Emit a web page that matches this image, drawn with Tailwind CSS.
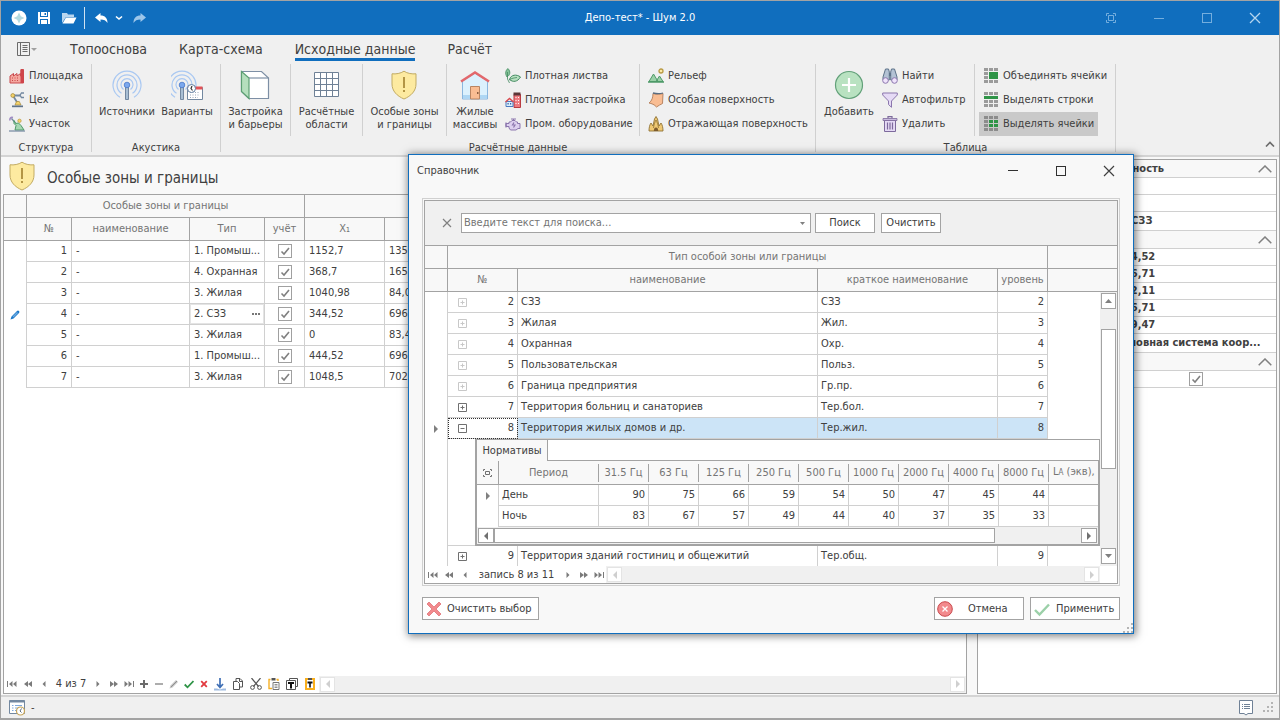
<!DOCTYPE html>
<html lang="ru">

<head>
    <meta charset="UTF-8">
    <meta name="viewport" content="width=device-width, initial-scale=1.0">
    <title>Депо-тест* - Шум 2.0</title>
    <script src="https://cdn.jsdelivr.net/npm/@tailwindcss/browser@4"></script>
</head>

<body class="relative h-screen overflow-hidden bg-white font-['DejaVu_Sans_Condensed','DejaVu_Sans',sans-serif] text-[11px] leading-4 text-[#404040]">

    <!-- shared glyphs -->
    <svg class="hidden">
        <symbol id="shield" viewBox="0 0 28 30">
            <path d="M14 1.2C10.500 3.500 6 4.200 2 3.800V14c0 7 5 12 12 15 7-3 12-8 12-15V3.800C22 4.200 17.500 3.500 14 1.200z" fill="#fdeaa0" stroke="#c2ab62" />
            <path d="M13 7h2v11h-2zM13 20h2v2h-2z" fill="#b39545" />
        </symbol>
        <symbol id="tick" viewBox="0 0 14 14"><path d="M3.500 7.500l2.500 2.500 5-6" fill="none" stroke="#808080" stroke-width="1.600" /></symbol>
        <symbol id="plus" viewBox="0 0 9 9"><path d="M.5.5h8v8h-8zM2.500 4.500h4M4.500 2.500v4" fill="none" stroke="currentColor" /></symbol>
        <symbol id="minus" viewBox="0 0 9 9"><path d="M.5.5h8v8h-8zM2.500 4.500h4" fill="none" stroke="currentColor" /></symbol>
        <symbol id="first" viewBox="0 0 10 6"><path d="M0 0h1v6H0zM5.500 0v6L2 3zM9.500 0v6L6 3z" fill="currentColor" /></symbol>
        <symbol id="rew" viewBox="0 0 8 6"><path d="M4 0v6L0 3zM8 0v6L4 3z" fill="currentColor" /></symbol>
        <symbol id="prev" viewBox="0 0 4 8"><path d="M4 0v8L0 4z" fill="currentColor" /></symbol>
        <symbol id="next" viewBox="0 0 4 8"><path d="M0 0v8l4-4z" fill="currentColor" /></symbol>
        <symbol id="ffwd" viewBox="0 0 8 6"><path d="M0 0v6l4-3zM4 0v6l4-3z" fill="currentColor" /></symbol>
        <symbol id="last" viewBox="0 0 10 6"><path d="M9 0h1v6H9zM.5 0v6L4 3zM4.500 0v6L8 3z" fill="currentColor" /></symbol>
        <symbol id="chev" viewBox="0 0 14 8"><path d="M.7 7.300L7 1l6.300 6.300" fill="none" stroke="#808080" stroke-width="1.500" /></symbol>
        <symbol id="fit" viewBox="0 0 10 10"><path d="M.5 3V.5H3M7 .5h2.500V3M9.500 7v2.500H7M3 9.500H.5V7M2.500 2.500h5v5h-5z" fill="none" stroke="currentColor" /></symbol>
        <symbol id="grip" viewBox="0 0 12 12"><path d="M8 0h2v2H8zM4 4h2v2H4zM8 4h2v2H8zM0 8h2v2H0zM4 8h2v2H4zM8 8h2v2H8z" fill="#b4b4b4" /></symbol>
        <symbol id="antenna" viewBox="0 0 30 30">
            <path d="M8 27.200a14 14 0 1 1 14 0M9.500 23.300a10 10 0 1 1 11 0M11.500 19.500a6 6 0 1 1 7 0" fill="none" stroke="#a9c8f2" stroke-width="1.200" />
            <path d="M13.500 17h3v12.500h-3z" fill="#a9bfd4" stroke="#7388a0" />
            <circle cx="15" cy="15" r="2.800" fill="#7ba8ee" stroke="#4a78c8" stroke-width=".8" />
        </symbol>
    </svg>

    <div class="flex h-full flex-col border border-b-2 border-[#a3a3a3] bg-[#f8f8f8]">

        <!-- window title -->
        <header class="relative flex h-[34px] shrink-0 items-center bg-[#106ebe] text-white">
            <div class="flex items-center pl-2.5">
                <svg class="size-4" viewBox="0 0 16 16"><circle cx="8" cy="8" r="7.500" fill="#fff" /><path d="M8 2.500L9.800 6.200 13.500 8 9.800 9.800 8 13.500 6.200 9.800 2.500 8l3.700-1.800z" fill="#b4dbe2" /></svg>
                <button class="ml-2.5" aria-label="Сохранить"><svg class="size-3.5" viewBox="0 0 14 14"><path d="M1 1h12v12H1z" fill="#fff" /><path d="M3 1h8v5H3zM3 8h8v5H3z" fill="#106ebe" /><path d="M4 1h6v4H4zM4 9h6v4H4z" fill="#fff" /><path d="M7.500 2H9v2H7.500z" fill="#106ebe" /></svg></button>
                <button class="ml-2.5" aria-label="Открыть"><svg class="h-3.5 w-4" viewBox="0 0 16 14"><path d="M1 12V2h5l1 1.500h6V6H5z" fill="#b9d6ef" /><path d="M1.500 12.500L5 6.500h10.500L12.500 12.500z" fill="#fff" /></svg></button>
                <span class="ml-[7px] h-[22px] w-px bg-[#cfe2f2]"></span>
                <button class="ml-2.5" aria-label="Отменить"><svg class="h-3.5 w-3.5" viewBox="0 0 14 14"><path d="M0 6.500L5.500 2v2.500c4.500 0 7 2.500 7 7.500-1.500-2.500-3.500-3.500-7-3.500V11z" fill="#fff" /></svg></button>
                <button class="ml-1.5" aria-label="Список действий"><svg class="h-3.5 w-2" viewBox="0 0 8 14"><path d="M1 5.500L4 8l3-2.500" fill="none" stroke="#fff" stroke-width="1.600" /></svg></button>
                <button class="ml-2.5" aria-label="Вернуть"><svg class="h-3.5 w-3.5" viewBox="0 0 14 14"><path d="M13 6.500L7.500 2v2.500c-4.500 0-7 2.500-7 7.500 1.500-2.500 3.500-3.500 7-3.500V11z" fill="#9dc6ea" /></svg></button>
            </div>
            <h1 class="absolute inset-x-0 text-center">Депо-тест* - Шум 2.0</h1>
            <div class="relative ml-auto flex text-[#74aede]">
                <button class="grid h-8 w-12 place-items-center" aria-label="Во весь экран"><svg class="size-2.5"><use href="#fit" /></svg></button>
                <button class="grid h-8 w-12 place-items-center" aria-label="Свернуть"><span class="h-px w-2.5 bg-current"></span></button>
                <button class="grid h-8 w-12 place-items-center" aria-label="Развернуть"><span class="size-2.5 border border-current"></span></button>
                <button class="grid h-8 w-12 place-items-center text-[#b5d5ef]" aria-label="Закрыть"><svg class="size-3" viewBox="0 0 12 12"><path d="M1 1l10 10M11 1L1 11" stroke="currentColor" stroke-width="1.300" /></svg></button>
            </div>
        </header>

        <!-- ribbon -->
        <div class="relative shrink-0 border-b-2 border-[#d4d4d4] bg-[#f0f0f0]">
            <nav class="flex h-[29px] text-[14px] leading-[22px]">
                <button class="ml-4 flex h-7 items-center" aria-label="Файл">
                    <svg class="h-3.5 w-5" viewBox="0 0 20 14"><path d="M.5.5h12v13H.5zM3.500.5v13M5.500 3.500h5M5.500 5.500h5M5.500 7.500h5M5.500 9.500h5" fill="none" stroke="#6b6b6b" /><path d="M14 6h6l-3 3z" fill="#a0a0a0" /></svg>
                </button>
                <a href="#" class="ml-[33px] mt-[3px]">Топооснова</a>
                <a href="#" class="ml-8 mt-[3px]">Карта-схема</a>
                <a href="#" class="ml-8 mt-[3px] h-[23px] border-b-3 border-[#106ebe]">Исходные данные</a>
                <a href="#" class="ml-8 mt-[3px]">Расчёт</a>
            </nav>
            <div class="flex h-[91px]">

                <section class="h-[88px] w-[91px] border-r border-[#d0d0d0]">
                    <div class="flex h-[72px] flex-col items-start pl-2">
                        <button class="flex h-6 items-center gap-1"><svg class="size-4" viewBox="0 0 16 16"><path d="M1 15V8l3.500-2.500V8L8 5.500V8l3.500-2.500V8h.5V1.500h2.500V15z" fill="#f4a79f" stroke="#c9484c" /><path d="M11.500 1.500h3V15h-3z" fill="#d0444a" /><path d="M3 9.500h1v1H3zM5.500 9.500h1v1h-1zM8 9.500h1v1H8zM3 12h1v1H3zM5.500 12h1v1h-1zM8 12h1v1H8z" fill="#c9484c" /></svg>Площадка</button>
                        <button class="flex h-6 items-center gap-1"><svg class="size-4" viewBox="0 0 16 16"><path d="M4 3.500h7M4.500 4.500l4 6.500" fill="none" stroke="#7388a0" stroke-width="1.800" /><path d="M15 1h-2.500L11 3.200l1.500 2.300H15" fill="none" stroke="#7388a0" stroke-width="1.300" /><circle cx="3.800" cy="3.500" r="1.900" fill="#f5d36a" stroke="#a58a3e" stroke-width=".8" /><path d="M6 13l1.500-3.500h2.800L12 13z" fill="#f5d36a" stroke="#a58a3e" stroke-width=".7" /><path d="M3 13.500h11v1.700H3z" fill="#5f7389" /></svg>Цех</button>
                        <button class="flex h-6 items-center gap-1"><svg class="size-4" viewBox="0 0 16 16"><path d="M.8 4.500c0-2.500 1-3.500 3.200-3" stroke="#a08bc4" stroke-width="1.600" fill="none" /><path d="M2.500 2.500l4 4.500" stroke="#7388a0" stroke-width="1.300" /><path d="M5 4.500l1.500 3L9.500 7l2.500 2.500L15 14H6l1-4.500-2-2z" fill="#a6d8b2" stroke="#4e9a68" /><circle cx="10.500" cy="4.800" r="1.700" fill="#f5d36a" stroke="#b99a44" stroke-width=".7" /><path d="M0 15h16" stroke="#7388a0" stroke-width="1.200" /></svg>Участок</button>
                    </div>
                    <h2 class="pt-1 text-center">Структура</h2>
                </section>

                <section class="h-[88px] w-[129px] border-r border-[#d0d0d0]">
                    <div class="flex h-[72px] justify-center leading-[13px]">
                        <button class="flex w-[62px] flex-col items-center pt-1.5"><svg class="mb-[5px] size-[30px]"><use href="#antenna" /></svg>Источники</button>
                        <button class="flex w-[58px] flex-col items-center pt-1.5"><svg class="mb-[5px] h-[30px] w-8" viewBox="0 0 32 30"><svg x="-4" width="30" height="30"><use href="#antenna" /></svg><path d="M16.500 17.500h15v12h-15z" fill="#fff" stroke="#7388a0" /><path d="M16.500 16.500h15v3h-15z" fill="#e25257" /><path d="M19 22.500h10M19 25h10M19 27.500h8" stroke="#9aa9bb" stroke-dasharray="1 1.500" /><circle cx="20.500" cy="18.500" r="4" fill="#fff" stroke="#5f7d9f" /><path d="M21 16l-1 2.500 1.500 2" fill="none" stroke="#333" stroke-width="1.200" /></svg>Варианты</button>
                    </div>
                    <h2 class="pt-1 text-center">Акустика</h2>
                </section>

                <section class="h-[88px] w-[595px] border-r border-[#d0d0d0]">
                    <div class="flex h-[72px]">
                        <div class="flex w-[70px] justify-center border-r border-[#d0d0d0] leading-[13px]">
                            <button class="flex flex-col items-center pt-1.5"><svg class="mb-[5px] size-[30px]" viewBox="0 0 30 30"><path d="M1.500 1.500h20l7 6.500v20.500H9l-7.500-7z" fill="#fff" stroke="#7d8fa5" stroke-width="1.200" /><path d="M1.500 1.500L9 8v20.500l-7.500-7z" fill="#b5dfbd" stroke="#5d9f73" stroke-width="1.200" /><path d="M9 8h19.500" stroke="#7d8fa5" stroke-width="1.200" /></svg>Застройка<br>и барьеры</button>
                        </div>
                        <div class="flex w-[72px] justify-center border-r border-[#d0d0d0] leading-[13px]">
                            <button class="flex flex-col items-center pt-1.5"><svg class="mb-[5px] size-[30px]" viewBox="0 0 30 30"><path d="M3 3h24v24H3z" fill="#fff" /><path d="M2.500 2.500h24v24h-24zM8.500 2.500v24M14.500 2.500v24M20.500 2.500v24M2.500 8.500h24M2.500 14.500h24M2.500 20.500h24" fill="none" stroke="#6f8196" /></svg>Расчётные<br>области</button>
                        </div>
                        <div class="flex w-[84px] justify-center border-r border-[#d0d0d0] leading-[13px]">
                            <button class="flex flex-col items-center pt-1.5"><svg class="mb-[5px] h-[30px] w-7"><use href="#shield" /></svg>Особые зоны<br>и границы</button>
                        </div>
                        <div class="flex w-[193px] border-r border-[#d0d0d0]">
                            <button class="flex w-14 flex-col items-center pt-1.5 leading-[13px]"><svg class="mb-[5px] size-[30px]" viewBox="0 0 30 30"><path d="M2.500 11L15 3l12.500 8v18h-25z" fill="#dcf1fd" stroke="#8ab6de" /><path d="M3 25h24v3.500H3z" fill="#aed7f4" /><path d="M1 11.500L15 2.500l14 9" fill="none" stroke="#e2686c" stroke-width="2.500" /><path d="M10.500 16.500h9V29h-9z" fill="#f9bd93" stroke="#b98562" /><path d="M17 22h1.500v2H17z" fill="#8a5f42" /></svg>Жилые<br>массивы</button>
                            <div class="flex flex-col items-start pl-0.5">
                                <button class="flex h-6 items-center gap-1"><svg class="size-4" viewBox="0 0 16 16"><path d="M2 9C-.5 5 1 2 3 .5 6 4 5 7 2 9z" fill="#86c39a" stroke="#428a60" stroke-width=".8" /><path d="M4.500 11.500c1.500-5 7-5.500 11-2.500-3 5-7.500 5.500-11 2.500z" fill="#b8e0c0" stroke="#428a60" /><path d="M2.500 4v7l2 4M4 12c3-2 5-2 8-2.500" fill="none" stroke="#428a60" stroke-width=".8" /></svg>Плотная листва</button>
                                <button class="flex h-6 items-center gap-1"><svg class="size-4" viewBox="0 0 16 16"><path d="M9 2.500h6.500v13H9z" fill="#ee7b80" stroke="#b93b42" /><path d="M8.500.5h7v3h-7z" fill="#5c3638" /><path d="M10.500 5h1v1h-1zM13 5h1v1h-1zM10.500 8h1v1h-1zM13 8h1v1h-1zM10.500 11h1v1h-1zM13 11h1v1h-1z" fill="#fff" /><path d="M1 9.500h7v5H1z" fill="#d9eefc" stroke="#4b7bc0" /><path d="M.5 10l4-3.500 4 3.500" fill="none" stroke="#d9484e" stroke-width="1.400" /><path d="M2.500 11h1.200v1.500H2.500zM5 11h1.200v1.500H5z" fill="#365f9f" /></svg>Плотная застройка</button>
                                <button class="flex h-6 items-center gap-1"><svg class="size-4" viewBox="0 0 16 16"><path d="M4 6h1.500L7 4.500h3L11.500 6h1v1.500H15v5h-2L11 14H5.500L4 12v-1.500H1V7.500h3z" fill="#ddd0ef" stroke="#8b76ad" /><path d="M6 3h5M8.500 3v1.500M1 6.500v5M9 6.500L7.500 9H10L8.500 11.500" fill="none" stroke="#8b76ad" stroke-width="1.200" /></svg>Пром. оборудование</button>
                            </div>
                        </div>
                        <div class="flex flex-col items-start pl-2">
                            <button class="flex h-6 items-center gap-1"><svg class="size-4" viewBox="0 0 16 16"><path d="M1 13.500L5.500 6 10 13.500zM8 13.500L11.500 8l3.500 5.500z" fill="#9bd0a8" stroke="#4e9a68" /><path d="M0 14h16" stroke="#4e9a68" stroke-width="1.500" /><circle cx="13" cy="3" r="2" fill="#fbe9a5" stroke="#b99a44" stroke-width="1.300" /></svg>Рельеф</button>
                            <button class="flex h-6 items-center gap-1"><svg class="size-4" viewBox="0 0 16 16"><path d="M5 1.500c4 1 7 1 10 0l-.5 10c-2 1-4 2-6 3.500C6.500 12.500 3.500 11.500 1 11c3-2 4-6 4-9.500z" fill="#f9bd93" stroke="#b98562" /><path d="M5 1c4 1 7 1 10 0" fill="none" stroke="#5a6c80" stroke-width="1.300" /></svg>Особая поверхность</button>
                            <button class="flex h-6 items-center gap-1"><svg class="size-4" viewBox="0 0 16 16"><path d="M1 15c0-3 .5-6 2-8l2 3L6.500 3 8 .5 9.500 3 11 10l2-3c1.500 2 2 5 2 8z" fill="#efc873" stroke="#8f7234" stroke-width=".9" /><path d="M5.500 12C6 8 7 6 8 4c1 2 2 4 2.500 8" fill="none" stroke="#8f7234" stroke-width=".8" /><path d="M5.800 15c0-2.500 1-3.500 2.200-3.500s2.200 1 2.200 3.500z" fill="#7d5b2c" /></svg>Отражающая поверхность</button>
                        </div>
                    </div>
                    <h2 class="pt-1 text-center">Расчётные данные</h2>
                </section>

                <section class="h-[88px] w-[300px] border-r border-[#d0d0d0]">
                    <div class="flex h-[72px]">
                        <div class="flex w-[159px] border-r border-[#d0d0d0]">
                            <button class="flex w-[66px] flex-col items-center pt-1.5 leading-[13px]"><svg class="mb-[5px] size-[30px]" viewBox="0 0 30 30"><circle cx="15" cy="15" r="13.500" fill="#b9e2c1" stroke="#62a079" stroke-width="1.200" /><path d="M15 8v14M8 15h14" stroke="#fff" stroke-width="2.200" /></svg>Добавить</button>
                            <div class="flex flex-col items-start">
                                <button class="flex h-6 items-center gap-1"><svg class="size-4" viewBox="0 0 16 16"><path d="M3.500 1h3l.8 3v8H1V9zM9.500 1h3L15 9v3H8.700V4z" fill="#b3c2d4" stroke="#5d7289" /><path d="M7 5h2v3H7z" fill="#5d7289" /><circle cx="3.500" cy="12.500" r="2.800" fill="#efe3fb" stroke="#8b76ad" /><circle cx="12.500" cy="12.500" r="2.800" fill="#efe3fb" stroke="#8b76ad" /></svg>Найти</button>
                                <button class="flex h-6 items-center gap-1"><svg class="size-4" viewBox="0 0 16 16"><path d="M.7 1h14.600v2L9.500 9v6.300l-3-2.800V9L.7 3z" fill="#e5daf5" stroke="#8b76ad" /></svg>Автофильтр</button>
                                <button class="flex h-6 items-center gap-1"><svg class="size-4" viewBox="0 0 16 16"><path d="M2.500 4.500h11v11h-11z" fill="#e5daf5" stroke="#7d6a9c" /><path d="M1 2.500h14v2H1z" fill="#c9bbdf" stroke="#7d6a9c" stroke-width=".8" /><path d="M6 2V.7h4V2M5.500 6.500v7M8 6.500v7M10.500 6.500v7" fill="none" stroke="#7d6a9c" stroke-width="1.200" /></svg>Удалить</button>
                            </div>
                        </div>
                        <div class="flex flex-col items-start pl-1">
                            <button class="flex h-6 items-center gap-[3px] pl-[5px]"><svg class="h-4 w-4" viewBox="0 0 16 16"><path d="M0 0h4v3H0zM5 0h4v3H5zM10 0h4v3h-4zM0 4h4v3H0zM0 8h4v3H0zM0 12h4v3H0zM5 12h4v3H5zM10 12h4v3h-4z" fill="#9b9b9b" /><path d="M5 4h9v7H5z" fill="#2f9447" /></svg>Объединять ячейки</button>
                            <button class="flex h-6 items-center gap-[3px] pl-[5px]"><svg class="h-4 w-4" viewBox="0 0 16 16"><path d="M0 0h4v3H0zM5 0h4v3H5zM10 0h4v3h-4zM0 8h4v3H0zM5 8h4v3H5zM10 8h4v3h-4zM0 12h4v3H0zM5 12h4v3H5zM10 12h4v3h-4z" fill="#9b9b9b" /><path d="M0 4h14v3H0z" fill="#2f9447" /></svg>Выделять строки</button>
                            <button class="flex h-6 items-center gap-[3px] bg-[#c9c9c9] pr-1 pl-[5px]"><svg class="h-4 w-4" viewBox="0 0 16 16"><path d="M0 0h4v3H0zM5 0h4v3H5zM10 0h4v3h-4zM0 4h4v3H0zM0 8h4v3H0zM0 12h4v3H0zM5 12h4v3H5zM10 12h4v3h-4z" fill="#8c8c8c" /><path d="M5 4h4v3H5zM10 4h4v3h-4zM5 8h4v3H5zM10 8h4v3h-4z" fill="#2f9447" /></svg>Выделять ячейки</button>
                        </div>
                    </div>
                    <h2 class="pt-1 text-center">Таблица</h2>
                </section>

                <button class="mr-1 mb-2 ml-auto self-end" aria-label="Свернуть ленту"><svg class="h-1.5 w-2.5" viewBox="0 0 10 6"><path d="M1 5.500l4-4 4 4" fill="none" stroke="#6b6b6b" stroke-width="1.600" /></svg></button>
            </div>
        </div>

        <!-- work area -->
        <main class="flex min-h-0 flex-1 gap-2.5 pr-0.5 pb-px pl-0.5">
            <section class="flex min-w-0 flex-1 flex-col">
                <div class="flex h-[37px] shrink-0 items-center gap-[11px] pl-[5px]">
                    <svg class="h-[30px] w-7"><use href="#shield" /></svg>
                    <h2 class="pt-1 text-[15px] leading-5">Особые зоны и границы</h2>
                </div>
                <div class="flex min-h-0 flex-1 flex-col border border-[#a3a3a3] bg-white">
                    <div class="min-h-0 flex-1 overflow-hidden">
                        <table class="w-full table-fixed border-separate border-spacing-0 [&_td]:h-[21px] [&_td]:overflow-hidden [&_td]:border-r [&_td]:border-b [&_td]:border-[#d0d0d0] [&_td]:px-1 [&_td]:py-0 [&_td]:whitespace-nowrap [&_td:first-child]:border-b-0 [&_th]:h-[23px] [&_th]:border-r [&_th]:border-b [&_th]:border-[#a3a3a3] [&_th]:bg-[#f8f8f8] [&_th]:p-0 [&_th]:font-normal [&_th]:text-[#757575]">
                            <colgroup>
                                <col class="w-[23px]"><col class="w-[45px]"><col class="w-[118px]"><col class="w-[75px]"><col class="w-10"><col class="w-20"><col class="w-20"><col>
                            </colgroup>
                            <thead>
                                <tr><th></th><th colspan="4">Особые зоны и границы</th><th colspan="3"></th></tr>
                                <tr><th></th><th>№</th><th>наименование</th><th>Тип</th><th>учёт</th><th>X₁</th><th></th><th></th></tr>
                            </thead>
                            <tbody>
                                <tr>
                                    <td></td><td class="text-right">1</td><td>-</td><td class="pr-0!">1. Промыш...</td>
                                    <td><label class="grid justify-center *:col-start-1 *:row-start-1"><input type="checkbox" checked aria-label="учёт 1" class="size-3.5 appearance-none border border-[#a0a0a0]"><svg class="size-3.5"><use href="#tick" /></svg></label></td>
                                    <td>1152,7</td><td>1357</td><td></td>
                                </tr>
                                <tr>
                                    <td></td><td class="text-right">2</td><td>-</td><td>4. Охранная</td>
                                    <td><label class="grid justify-center *:col-start-1 *:row-start-1"><input type="checkbox" checked aria-label="учёт 2" class="size-3.5 appearance-none border border-[#a0a0a0]"><svg class="size-3.5"><use href="#tick" /></svg></label></td>
                                    <td>368,7</td><td>1650</td><td></td>
                                </tr>
                                <tr>
                                    <td></td><td class="text-right">3</td><td>-</td><td>3. Жилая</td>
                                    <td><label class="grid justify-center *:col-start-1 *:row-start-1"><input type="checkbox" checked aria-label="учёт 3" class="size-3.5 appearance-none border border-[#a0a0a0]"><svg class="size-3.5"><use href="#tick" /></svg></label></td>
                                    <td>1040,98</td><td>84,0</td><td></td>
                                </tr>
                                <tr>
                                    <td><svg class="mx-auto size-2.5" viewBox="0 0 10 10"><path d="M.5 9.500L1.500 6.500 7 1a1.400 1.400 0 0 1 2 2L3.500 8.500z" fill="#1a76c8" /><path d="M2.500 6.500L7 2l1 1-4.500 4.500z" fill="#6aaae2" /></svg></td>
                                    <td class="text-right">4</td><td>-</td>
                                    <td class="shadow-[inset_0_0_0_1px_#e4e4e4]"><div class="flex items-center justify-between">2. СЗЗ<button aria-label="Выбрать тип"><svg class="h-0.5 w-2" viewBox="0 0 8 2"><path d="M0 0h2v2H0zM3 0h2v2H3zM6 0h2v2H6z" fill="#777" /></svg></button></div></td>
                                    <td><label class="grid justify-center *:col-start-1 *:row-start-1"><input type="checkbox" checked aria-label="учёт 4" class="size-3.5 appearance-none border border-[#a0a0a0]"><svg class="size-3.5"><use href="#tick" /></svg></label></td>
                                    <td>344,52</td><td>696,</td><td></td>
                                </tr>
                                <tr>
                                    <td></td><td class="text-right">5</td><td>-</td><td>3. Жилая</td>
                                    <td><label class="grid justify-center *:col-start-1 *:row-start-1"><input type="checkbox" checked aria-label="учёт 5" class="size-3.5 appearance-none border border-[#a0a0a0]"><svg class="size-3.5"><use href="#tick" /></svg></label></td>
                                    <td>0</td><td>83,4</td><td></td>
                                </tr>
                                <tr>
                                    <td></td><td class="text-right">6</td><td>-</td><td class="pr-0!">1. Промыш...</td>
                                    <td><label class="grid justify-center *:col-start-1 *:row-start-1"><input type="checkbox" checked aria-label="учёт 6" class="size-3.5 appearance-none border border-[#a0a0a0]"><svg class="size-3.5"><use href="#tick" /></svg></label></td>
                                    <td>444,52</td><td>696,</td><td></td>
                                </tr>
                                <tr>
                                    <td></td><td class="text-right">7</td><td>-</td><td>3. Жилая</td>
                                    <td><label class="grid justify-center *:col-start-1 *:row-start-1"><input type="checkbox" checked aria-label="учёт 7" class="size-3.5 appearance-none border border-[#a0a0a0]"><svg class="size-3.5"><use href="#tick" /></svg></label></td>
                                    <td>1048,5</td><td>702,</td><td></td>
                                </tr>
                            </tbody>
                        </table>
                    </div>
                    <!-- record navigator -->
                    <div class="flex h-[18px] shrink-0 items-center text-[#7a7a7a]">
                        <button class="grid w-[15px] place-items-center" aria-label="Первая"><svg class="h-1.5 w-2.5"><use href="#first" /></svg></button>
                        <button class="grid w-[17px] place-items-center" aria-label="Назад на страницу"><svg class="h-1.5 w-2"><use href="#rew" /></svg></button>
                        <button class="grid w-4 place-items-center" aria-label="Предыдущая"><svg class="h-1.5 w-1"><use href="#prev" /></svg></button>
                        <span class="w-[38px] text-center text-[#404040]">4 из 7</span>
                        <button class="grid w-4 place-items-center" aria-label="Следующая"><svg class="h-1.5 w-1"><use href="#next" /></svg></button>
                        <button class="grid w-[15px] place-items-center" aria-label="Вперёд на страницу"><svg class="h-1.5 w-2"><use href="#ffwd" /></svg></button>
                        <button class="grid w-[15px] place-items-center" aria-label="Последняя"><svg class="h-1.5 w-2.5"><use href="#last" /></svg></button>
                        <button class="grid w-[15px] place-items-center" aria-label="Добавить запись"><svg class="size-2" viewBox="0 0 8 8"><path d="M3 0h2v3h3v2H5v3H3V5H0V3h3z" fill="#6b6b6b" /></svg></button>
                        <button class="grid w-[15px] place-items-center" aria-label="Удалить запись"><svg class="h-0.5 w-2" viewBox="0 0 8 2"><path d="M0 0h8v2H0z" fill="#adadad" /></svg></button>
                        <button class="grid w-[15px] place-items-center" aria-label="Правка"><svg class="size-2.5" viewBox="0 0 10 10"><path d="M.5 9.500L1.500 6.500 7 1l2 2L3.500 8.500z" fill="#c4c4c4" /><path d="M2 8l6-6" stroke="#8f8f8f" /></svg></button>
                        <button class="grid w-[15px] place-items-center" aria-label="Принять"><svg class="size-2.5" viewBox="0 0 10 10"><path d="M.7 5.500l2.800 2.800L9.500 2" fill="none" stroke="#2f9447" stroke-width="1.800" /></svg></button>
                        <button class="grid w-[15px] place-items-center" aria-label="Отклонить"><svg class="size-2" viewBox="0 0 8 8"><path d="M1.200 1.200l5.600 5.600M6.800 1.200L1.200 6.800" stroke="#e2393f" stroke-width="1.800" /></svg></button>
                        <button class="grid w-[18px] place-items-center" aria-label="Вниз"><svg class="h-[13px] w-3" viewBox="0 0 12 13"><path d="M6 0v9M3 6l3 3.500L9 6" fill="none" stroke="#3f6fb5" stroke-width="1.700" /><path d="M0 10.500h3l3 1 3-1h3v2H0z" fill="#9fbbe0" /></svg></button>
                        <button class="grid w-[18px] place-items-center" aria-label="Копировать"><svg class="size-3" viewBox="0 0 12 12"><path d="M1.500 3.500h4l2 2v6h-6zM4 3V.5h4L10.500 3v6H8M7.500.5V3.500h3" fill="none" stroke="#555" /></svg></button>
                        <button class="grid w-[18px] place-items-center" aria-label="Вырезать"><svg class="size-3" viewBox="0 0 12 12"><path d="M1.500 0L8.500 8.500M10.500 0L3.500 8.500" stroke="#555" stroke-width="1.200" /><circle cx="2.500" cy="9.500" r="1.900" fill="none" stroke="#555" /><circle cx="9.500" cy="9.500" r="1.900" fill="none" stroke="#555" /></svg></button>
                        <button class="grid w-[18px] place-items-center" aria-label="Вставить"><svg class="size-3" viewBox="0 0 12 12"><path d="M2.500 1.500H1v9h3M8.500 1.500H10V3" fill="none" stroke="#f5b027" stroke-width="1.400" /><path d="M3.500 0h4v2.500h-4z" fill="#555" /><path d="M5 4.500h6v7H5z" fill="#fff" stroke="#777" /><path d="M6.500 6.500h3M6.500 8h3M6.500 9.500h3" stroke="#777" stroke-width=".8" /></svg></button>
                        <button class="grid w-[18px] place-items-center" aria-label="Копировать текст"><svg class="size-3" viewBox="0 0 12 12"><path d="M3.500 2.500v-2h8v8h-2" fill="none" stroke="#555" /><path d="M.5 2.500h9v9h-9z" fill="#fff" stroke="#555" /><path d="M2 4h6v2H6v4.500H4V6H2z" fill="#111" /></svg></button>
                        <button class="grid w-[18px] place-items-center" aria-label="Вставить текст"><svg class="size-3" viewBox="0 0 12 12"><path d="M1 0h10v12H1z" fill="#fbb01c" /><path d="M3 2h6v8H3z" fill="#fff" /><path d="M4 0h4v2H4z" fill="#555" /><path d="M3.500 3.500h5v2H6.800V9.500H5.200V5.500H3.500z" fill="#111" /></svg></button>
                        <div class="flex h-[17px] flex-1 items-center justify-between bg-[#f0f0f0] px-px text-[#cfcfcf]">
                            <button class="grid size-[15px] place-items-center border border-[#e4e4e4] bg-white" aria-label="Влево"><svg class="h-2 w-1"><use href="#prev" /></svg></button>
                            <button class="grid size-[15px] place-items-center border border-[#e4e4e4] bg-white" aria-label="Вправо"><svg class="h-2 w-1"><use href="#next" /></svg></button>
                        </div>
                    </div>
                </div>
            </section>

            <!-- properties -->
            <aside class="mt-0.5 w-[300px] shrink-0 border border-[#a3a3a3] bg-white">
                <table class="w-full table-fixed border-separate border-spacing-0 [&_td]:h-[17px] [&_td]:overflow-hidden [&_td]:border-b [&_td]:border-[#d0d0d0] [&_td]:p-0 [&_td]:pl-1 [&_td]:leading-4 [&_td]:font-bold [&_td]:whitespace-nowrap [&_th]:h-[18px] [&_th]:border-b [&_th]:border-[#d0d0d0] [&_th]:bg-[#f8f8f8] [&_th]:p-0 [&_th]:leading-[17px]">
                    <colgroup><col class="w-[133px]"><col></colgroup>
                    <tbody>
                        <tr><th colspan="2"><div class="flex items-center justify-between pr-1"><span class="w-[186px] text-right">Принадлежность</span><svg class="h-2 w-3.5"><use href="#chev" /></svg></div></th></tr>
                        <tr><td></td><td></td></tr>
                        <tr><td></td><td></td></tr>
                        <tr class="*:h-[19px]!"><td></td><td class="pl-1.5!">2. СЗЗ</td></tr>
                        <tr><th colspan="2"><div class="flex justify-end pr-1"><svg class="h-2 w-3.5"><use href="#chev" /></svg></div></th></tr>
                        <tr><td></td><td class="pl-1.5!">344,52</td></tr>
                        <tr><td></td><td class="pl-1.5!">696,71</td></tr>
                        <tr><td></td><td class="pl-1.5!">442,11</td></tr>
                        <tr><td></td><td class="pl-1.5!">696,71</td></tr>
                        <tr><td></td><td class="pl-1.5!">119,47</td></tr>
                        <tr class="*:h-[19px]!"><td></td><td>Основная система коор...</td></tr>
                        <tr><th colspan="2"><div class="flex justify-end pr-1"><svg class="h-2 w-3.5"><use href="#chev" /></svg></div></th></tr>
                        <tr><td></td><td><label class="grid justify-center *:col-start-1 *:row-start-1"><input type="checkbox" checked aria-label="учёт" class="size-3.5 appearance-none border border-[#a0a0a0]"><svg class="size-3.5"><use href="#tick" /></svg></label></td></tr>
                    </tbody>
                </table>
            </aside>
        </main>

        <!-- status bar -->
        <footer class="flex h-[23px] shrink-0 items-center border-t-2 border-[#d4d4d4] bg-[#f0f0f0] pr-1 pl-2">
            <svg class="size-4" viewBox="0 0 16 16"><path d="M.5.5h15v13H.5z" fill="#fff" stroke="#7388a0" /><path d="M.5.5h15v2H.5z" fill="#7388a0" /><path d="M3 5.500h1.500M3 8h1.500M3 10.500h1.500M6 5.500h7M6 8h5M6 10.500h3" stroke="#7fa9dc" /><circle cx="11.500" cy="11" r="4" fill="#fff" stroke="#c6a458" stroke-width="1.200" /><path d="M12.500 8.500L11 11l1.500 1.500" fill="none" stroke="#5a6c80" /></svg>
            <span class="ml-1.5">-</span>
            <svg class="ml-auto h-4 w-3.5" viewBox="0 0 14 16"><path d="M.5.5h13v13H9L7 15l-2-1.500H.5z" fill="#fff" stroke="#6f8196" /><path d="M3 4.500h1M5 4.500h6M3 6.500h1M5 6.500h6M3 8.500h1M5 8.500h6" stroke="#6f8196" /></svg>
            <svg class="ml-2.5 size-3"><use href="#grip" /></svg>
        </footer>
    </div>

    <!-- reference book window -->
    <div role="dialog" aria-label="Справочник" class="absolute top-[154px] left-[408px] flex w-[726px] flex-col border border-[#106ebe] bg-[#f8f8f8] shadow-[1px_1px_8px_1px_rgba(0,0,0,0.5)]">
        <div class="flex h-[43px] items-start">
            <h2 class="pt-2 pl-2">Справочник</h2>
            <div class="ml-auto flex">
                <button class="grid h-[31px] w-12 place-items-center" aria-label="Свернуть"><span class="h-px w-2.5 bg-[#303030]"></span></button>
                <button class="grid h-[31px] w-12 place-items-center" aria-label="Развернуть"><span class="size-2.5 border border-[#303030]"></span></button>
                <button class="grid h-[31px] w-12 place-items-center" aria-label="Закрыть"><svg class="size-3" viewBox="0 0 12 12"><path d="M1 1l10 10M11 1L1 11" stroke="#404040" stroke-width="1.200" /></svg></button>
            </div>
        </div>

        <div class="mx-[13px] border border-[#d0d0d0] p-px">
            <div class="relative border border-[#a3a3a3] bg-white">
                <form class="flex h-[45px] items-center border-b border-[#a3a3a3] bg-[#f0f0f0] pl-[17px]">
                    <button type="button" aria-label="Закрыть поиск"><svg class="size-2.5" viewBox="0 0 10 10"><path d="M1 1l8 8M9 1L1 9" stroke="#808080" stroke-width="1.200" /></svg></button>
                    <div class="ml-[9px] flex h-5 w-[350px] items-center border border-[#a3a3a3] bg-white pr-[5px]">
                        <input type="text" aria-label="Поиск" placeholder="Введите текст для поиска..." class="min-w-0 flex-1 px-0.5 outline-none placeholder:text-[#757575]">
                        <svg class="h-[3px] w-[5px]" viewBox="0 0 5 3"><path d="M0 0h5L2.500 3z" fill="#808080" /></svg>
                    </div>
                    <button type="button" class="ml-1 h-5 w-[60px] border border-[#a3a3a3] bg-white">Поиск</button>
                    <button type="button" class="ml-1.5 h-5 w-[60px] border border-[#a3a3a3] bg-white">Очистить</button>
                </form>

                <table class="w-full table-fixed border-separate border-spacing-0">
                    <colgroup>
                        <col class="w-[23px]"><col class="w-[70px]"><col class="w-[300px]"><col class="w-[180px]"><col class="w-[50px]"><col>
                    </colgroup>
                    <thead class="[&_th]:h-[23px] [&_th]:border-r [&_th]:border-b [&_th]:border-[#a3a3a3] [&_th]:bg-[#f8f8f8] [&_th]:p-0 [&_th]:font-normal [&_th]:text-[#757575] [&_th:last-child]:border-r-0">
                        <tr><th></th><th colspan="4">Тип особой зоны или границы</th><th></th></tr>
                        <tr><th></th><th>№</th><th>наименование</th><th>краткое наименование</th><th>уровень</th><th></th></tr>
                    </thead>
                    <tbody class="[&>tr>td]:h-[21px] [&>tr>td]:border-r [&>tr>td]:border-b [&>tr>td]:border-[#d0d0d0] [&>tr>td]:px-[3px] [&>tr>td]:py-0 [&>tr>td:first-child]:border-b-0 [&>tr>td:last-child]:border-r-0 [&>tr>td:nth-child(6)]:border-b-0">
                        <tr><td></td><td><div class="flex items-center justify-between pl-[7px]"><button class="text-[#c8c8c8]" aria-label="Раскрыть 2"><svg class="size-[9px]"><use href="#plus" /></svg></button>2</div></td><td>СЗЗ</td><td>СЗЗ</td><td class="text-right">2</td><td></td></tr>
                        <tr><td></td><td><div class="flex items-center justify-between pl-[7px]"><button class="text-[#c8c8c8]" aria-label="Раскрыть 3"><svg class="size-[9px]"><use href="#plus" /></svg></button>3</div></td><td>Жилая</td><td>Жил.</td><td class="text-right">3</td><td></td></tr>
                        <tr><td></td><td><div class="flex items-center justify-between pl-[7px]"><button class="text-[#c8c8c8]" aria-label="Раскрыть 4"><svg class="size-[9px]"><use href="#plus" /></svg></button>4</div></td><td>Охранная</td><td>Охр.</td><td class="text-right">4</td><td></td></tr>
                        <tr><td></td><td><div class="flex items-center justify-between pl-[7px]"><button class="text-[#c8c8c8]" aria-label="Раскрыть 5"><svg class="size-[9px]"><use href="#plus" /></svg></button>5</div></td><td>Пользовательская</td><td>Польз.</td><td class="text-right">5</td><td></td></tr>
                        <tr><td></td><td><div class="flex items-center justify-between pl-[7px]"><button class="text-[#c8c8c8]" aria-label="Раскрыть 6"><svg class="size-[9px]"><use href="#plus" /></svg></button>6</div></td><td>Граница предприятия</td><td>Гр.пр.</td><td class="text-right">6</td><td></td></tr>
                        <tr><td></td><td><div class="flex items-center justify-between pl-[7px]"><button class="text-[#707070]" aria-label="Раскрыть 7"><svg class="size-[9px]"><use href="#plus" /></svg></button>7</div></td><td>Территория больниц и санаториев</td><td>Тер.бол.</td><td class="text-right">7</td><td></td></tr>
                        <tr>
                            <td><svg class="mx-auto h-2 w-1 text-[#808080]"><use href="#next" /></svg></td>
                            <td class="outline-1 -outline-offset-1 outline-dotted outline-[#303030]"><div class="flex items-center justify-between pl-[7px]"><button class="text-[#707070]" aria-label="Свернуть 8"><svg class="size-[9px]"><use href="#minus" /></svg></button>8</div></td>
                            <td class="bg-[#cce4f7]">Территория жилых домов и др.</td><td class="bg-[#cce4f7]">Тер.жил.</td><td class="bg-[#cce4f7] text-right">8</td><td></td>
                        </tr>
                        <tr>
                            <td></td>
                            <td colspan="5" class="pr-[17px]! pl-[27px]!">
                                <div class="flex border-t border-l-2 border-[#a3a3a3]">
                                    <button class="h-[21px] w-[71px] border-r border-[#a3a3a3] bg-[#f8f8f8] leading-5">Нормативы</button>
                                    <div class="flex-1 border-r border-b border-[#a3a3a3]"></div>
                                </div>
                                <div class="-mb-px border-2 border-t-0 border-[#a3a3a3]">
                                    <table class="w-full table-fixed border-separate border-spacing-0 [&_td]:h-[21px] [&_td]:border-r [&_td]:border-b [&_td]:border-[#d0d0d0] [&_td]:px-[3px] [&_td]:py-0 [&_td]:text-right [&_td:first-child]:border-b-0 [&_td:last-child]:border-r-0 [&_td:nth-child(2)]:text-left [&_th]:h-6 [&_th]:overflow-hidden [&_th]:border-b [&_th]:border-[#a3a3a3] [&_th]:bg-[#f8f8f8] [&_th]:p-0 [&_th]:font-normal [&_th]:whitespace-nowrap [&_th]:text-[#757575] [&_th>div]:h-[18px] [&_th>div]:border-r [&_th>div]:border-[#a3a3a3] [&_th>div]:leading-[18px]">
                                        <colgroup>
                                            <col class="w-[22px]"><col class="w-[100px]"><col class="w-[50px]"><col class="w-[50px]"><col class="w-[50px]"><col class="w-[50px]"><col class="w-[50px]"><col class="w-[50px]"><col class="w-[50px]"><col class="w-[50px]"><col class="w-[50px]"><col>
                                        </colgroup>
                                        <thead>
                                            <tr>
                                                <th class="border-r"><svg class="mx-auto h-2.5 w-[9px]" viewBox="0 0 9 10"><path d="M.5 3V1.500H2M7 1.500h1.500V3M8.500 7v1.500H7M2 8.500H.5V7M2.500 3.500h4v3h-4z" fill="none" stroke="#707070" /></svg></th>
                                                <th><div>Период</div></th><th><div>31.5 Гц</div></th><th><div>63 Гц</div></th><th><div>125 Гц</div></th><th><div>250 Гц</div></th><th><div>500 Гц</div></th><th><div>1000 Гц</div></th><th><div>2000 Гц</div></th><th><div>4000 Гц</div></th><th><div>8000 Гц</div></th><th class="pl-1! text-left">L<span class="text-[8px]">A</span> (экв),</th>
                                            </tr>
                                        </thead>
                                        <tbody>
                                            <tr><td><svg class="mx-auto h-2 w-1 text-[#808080]"><use href="#next" /></svg></td><td>День</td><td>90</td><td>75</td><td>66</td><td>59</td><td>54</td><td>50</td><td>47</td><td>45</td><td>44</td><td></td></tr>
                                            <tr><td></td><td>Ночь</td><td>83</td><td>67</td><td>57</td><td>49</td><td>44</td><td>40</td><td>37</td><td>35</td><td>33</td><td></td></tr>
                                        </tbody>
                                    </table>
                                    <div class="flex h-[17px] items-center bg-[#f0f0f0] px-px text-[#707070]">
                                        <button class="grid h-[15px] w-4 place-items-center border border-[#a3a3a3] bg-white" aria-label="Влево"><svg class="h-2 w-1"><use href="#prev" /></svg></button>
                                        <span class="h-[15px] w-[501px] border border-[#a3a3a3] bg-white"></span>
                                        <button class="ml-auto grid h-[15px] w-4 place-items-center border border-[#a3a3a3] bg-white" aria-label="Вправо"><svg class="h-2 w-1"><use href="#next" /></svg></button>
                                    </div>
                                </div>
                            </td>
                        </tr>
                        <tr class="*:h-5! *:border-b-0!"><td></td><td><div class="flex items-center justify-between pl-[7px]"><button class="text-[#707070]" aria-label="Раскрыть 9"><svg class="size-[9px]"><use href="#plus" /></svg></button>9</div></td><td>Территория зданий гостиниц и общежитий</td><td>Тер.общ.</td><td class="text-right">9</td><td></td></tr>
                    </tbody>
                </table>

                <!-- vertical scrollbar over the grid -->
                <div class="absolute top-[91px] right-0 bottom-[17px] flex w-[17px] flex-col bg-[#f0f0f0] px-px pt-px pb-0.5">
                    <button class="grid h-4 place-items-center border border-[#a3a3a3] bg-white" aria-label="Вверх"><svg class="h-1 w-[7px]" viewBox="0 0 7 4"><path d="M0 4h7L3.500 0z" fill="#808080" /></svg></button>
                    <span class="mt-5 h-[140px] border border-[#a3a3a3] bg-white"></span>
                    <button class="mt-auto grid h-4 place-items-center border border-[#a3a3a3] bg-white" aria-label="Вниз"><svg class="h-1 w-[7px]" viewBox="0 0 7 4"><path d="M0 0h7L3.500 4z" fill="#808080" /></svg></button>
                </div>

                <div class="flex h-[17px] items-center pr-[17px] text-[#7a7a7a]">
                    <button class="grid w-4 place-items-center" aria-label="Первая"><svg class="h-1.5 w-2.5"><use href="#first" /></svg></button>
                    <button class="grid w-4 place-items-center" aria-label="Назад на страницу"><svg class="h-1.5 w-2"><use href="#rew" /></svg></button>
                    <button class="grid w-4 place-items-center" aria-label="Предыдущая"><svg class="h-1.5 w-1"><use href="#prev" /></svg></button>
                    <span class="w-[87px] text-center text-[#404040]">запись 8 из 11</span>
                    <button class="grid w-4 place-items-center" aria-label="Следующая"><svg class="h-1.5 w-1"><use href="#next" /></svg></button>
                    <button class="grid w-[15px] place-items-center" aria-label="Вперёд на страницу"><svg class="h-1.5 w-2"><use href="#ffwd" /></svg></button>
                    <button class="grid w-[15px] place-items-center" aria-label="Последняя"><svg class="h-1.5 w-2.5"><use href="#last" /></svg></button>
                    <div class="flex h-[17px] flex-1 items-center justify-between bg-[#f0f0f0] px-px text-[#cfcfcf]">
                        <button class="grid size-[15px] place-items-center border border-[#e4e4e4] bg-white" aria-label="Влево"><svg class="h-2 w-1"><use href="#prev" /></svg></button>
                        <button class="grid size-[15px] place-items-center border border-[#e4e4e4] bg-white" aria-label="Вправо"><svg class="h-2 w-1"><use href="#next" /></svg></button>
                    </div>
                </div>
            </div>
        </div>

        <div class="flex gap-1.5 px-[13px] pt-[11px] pb-[13px]">
            <button class="flex h-[23px] w-[117px] items-center gap-[5px] border border-[#a3a3a3] bg-white pl-[3px]"><svg class="size-4" viewBox="0 0 16 16"><path d="M1 3l2-2 5 5 5-5 2 2-5 5 5 5-2 2-5-5-5 5-2-2 5-5z" fill="#f28a8d" stroke="#d9575c" stroke-width=".6" /></svg>Очистить выбор</button>
            <button class="ml-auto flex h-[23px] w-[90px] items-center border border-[#a3a3a3] bg-white pl-0.5"><svg class="size-4" viewBox="0 0 16 16"><circle cx="8" cy="8" r="7.300" fill="#f28a8d" stroke="#c9484c" /><path d="M5.500 5.500l5 5M10.500 5.500l-5 5" stroke="#fff" stroke-width="1.300" /></svg><span class="ml-[15px]">Отмена</span></button>
            <button class="flex h-[23px] w-[90px] items-center gap-1.5 border border-[#a3a3a3] bg-white pl-[3px]"><svg class="size-4" viewBox="0 0 16 16"><path d="M1 9l4.500 4.500L15 3.500" fill="none" stroke="#9bd0a8" stroke-width="2.400" /></svg>Применить</button>
        </div>
        <svg class="absolute right-0 bottom-0 size-2.5" viewBox="0 0 10 10"><use href="#grip" width="12" height="12" /></svg>
    </div>
</body>

</html>
